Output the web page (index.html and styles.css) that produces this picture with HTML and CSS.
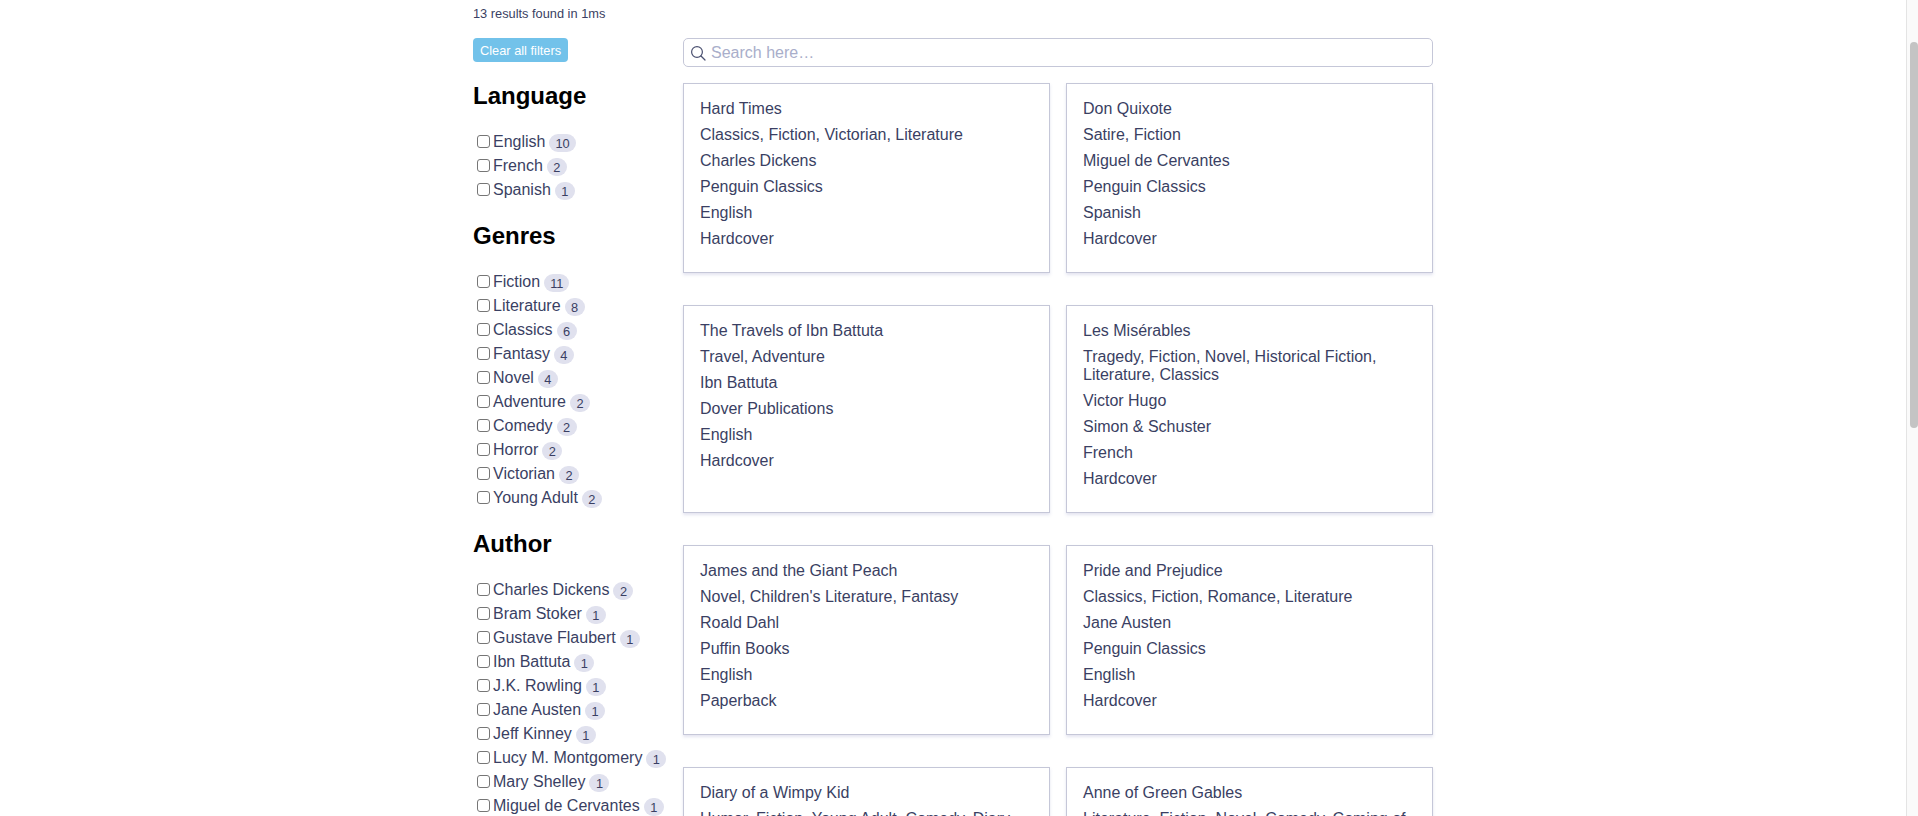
FILE: index.html
```html
<!DOCTYPE html>
<html lang="en">
<head>
    <meta charset="UTF-8">
    <meta name="viewport" content="width=device-width, initial-scale=1.0">
    <title>Book search</title>
    <link rel="stylesheet" href="styles.css">
</head>
<body>
    <div class="page">
        <div class="stats">13 results found in 1ms</div>
        <div class="layout">
            <aside class="filters">
                <button class="clear-btn">Clear all filters</button>

                <h2>Language</h2>
                <ul class="facet">
                    <li><input type="checkbox"><span>English</span><em>10</em></li>
                    <li><input type="checkbox"><span>French</span><em>2</em></li>
                    <li><input type="checkbox"><span>Spanish</span><em>1</em></li>
                </ul>

                <h2>Genres</h2>
                <ul class="facet">
                    <li><input type="checkbox"><span>Fiction</span><em>11</em></li>
                    <li><input type="checkbox"><span>Literature</span><em>8</em></li>
                    <li><input type="checkbox"><span>Classics</span><em>6</em></li>
                    <li><input type="checkbox"><span>Fantasy</span><em>4</em></li>
                    <li><input type="checkbox"><span>Novel</span><em>4</em></li>
                    <li><input type="checkbox"><span>Adventure</span><em>2</em></li>
                    <li><input type="checkbox"><span>Comedy</span><em>2</em></li>
                    <li><input type="checkbox"><span>Horror</span><em>2</em></li>
                    <li><input type="checkbox"><span>Victorian</span><em>2</em></li>
                    <li><input type="checkbox"><span>Young Adult</span><em>2</em></li>
                </ul>

                <h2>Author</h2>
                <ul class="facet">
                    <li><input type="checkbox"><span>Charles Dickens</span><em>2</em></li>
                    <li><input type="checkbox"><span>Bram Stoker</span><em>1</em></li>
                    <li><input type="checkbox"><span>Gustave Flaubert</span><em>1</em></li>
                    <li><input type="checkbox"><span>Ibn Battuta</span><em>1</em></li>
                    <li><input type="checkbox"><span>J.K. Rowling</span><em>1</em></li>
                    <li><input type="checkbox"><span>Jane Austen</span><em>1</em></li>
                    <li><input type="checkbox"><span>Jeff Kinney</span><em>1</em></li>
                    <li><input type="checkbox"><span>Lucy M. Montgomery</span><em>1</em></li>
                    <li><input type="checkbox"><span>Mary Shelley</span><em>1</em></li>
                    <li><input type="checkbox"><span>Miguel de Cervantes</span><em>1</em></li>
                </ul>
            </aside>

            <main class="results">
                <label class="search">
                    <svg width="16" height="16" viewBox="0 0 16 16" fill="none" stroke="#4a5070" stroke-width="1.2">
                        <circle cx="7" cy="7" r="5.4"/>
                        <path d="M11 11l4 4" stroke-linecap="round"/>
                    </svg>
                    <input type="text" placeholder="Search here…">
                </label>

                <div class="hits">
                    <article class="hit">
                        <p>Hard Times</p>
                        <p>Classics, Fiction, Victorian, Literature</p>
                        <p>Charles Dickens</p>
                        <p>Penguin Classics</p>
                        <p>English</p>
                        <p>Hardcover</p>
                    </article>
                    <article class="hit">
                        <p>Don Quixote</p>
                        <p>Satire, Fiction</p>
                        <p>Miguel de Cervantes</p>
                        <p>Penguin Classics</p>
                        <p>Spanish</p>
                        <p>Hardcover</p>
                    </article>
                    <article class="hit">
                        <p>The Travels of Ibn Battuta</p>
                        <p>Travel, Adventure</p>
                        <p>Ibn Battuta</p>
                        <p>Dover Publications</p>
                        <p>English</p>
                        <p>Hardcover</p>
                    </article>
                    <article class="hit">
                        <p>Les Misérables</p>
                        <p>Tragedy, Fiction, Novel, Historical Fiction, Literature, Classics</p>
                        <p>Victor Hugo</p>
                        <p>Simon &amp; Schuster</p>
                        <p>French</p>
                        <p>Hardcover</p>
                    </article>
                    <article class="hit">
                        <p>James and the Giant Peach</p>
                        <p>Novel, Children's Literature, Fantasy</p>
                        <p>Roald Dahl</p>
                        <p>Puffin Books</p>
                        <p>English</p>
                        <p>Paperback</p>
                    </article>
                    <article class="hit">
                        <p>Pride and Prejudice</p>
                        <p>Classics, Fiction, Romance, Literature</p>
                        <p>Jane Austen</p>
                        <p>Penguin Classics</p>
                        <p>English</p>
                        <p>Hardcover</p>
                    </article>
                    <article class="hit">
                        <p>Diary of a Wimpy Kid</p>
                        <p>Humor, Fiction, Young Adult, Comedy, Diary</p>
                    </article>
                    <article class="hit">
                        <p>Anne of Green Gables</p>
                        <p>Literature, Fiction, Novel, Comedy, Coming of Age</p>
                    </article>
                </div>
            </main>
        </div>
    </div>

    <div class="scrollbar"><div class="thumb"></div></div>
</body>
</html>
```

FILE: styles.css
```css
html, body {
    height: 100%;
}
body {
    display: flex;
    margin: 0;
    overflow: hidden;
    background-color: #fff;
    color: #3a3f63;
    font-family: "Liberation Sans", Arial, sans-serif;
    font-size: 16px;
}
.page {
    flex: 1;
    height: 816px;
    overflow: hidden;
    padding: 6px 0 0 473px;
    box-sizing: border-box;
}
.stats {
    font-size: 12.8px;
    line-height: 15px;
    margin-bottom: 17px;
}
.layout {
    display: flex;
    width: 960px;
}
.filters {
    width: 210px;
    flex-shrink: 0;
}
.clear-btn {
    display: block;
    height: 24px;
    padding: 0 7px;
    border: none;
    border-radius: 4px;
    background-color: #72c2ea;
    color: #fff;
    font-family: inherit;
    font-size: 12.8px;
    font-weight: normal;
}
h2 {
    margin: 20px 0;
    color: #000;
    font-size: 24px;
    line-height: 28px;
}
.facet {
    list-style: none;
    margin: 0;
    padding: 0;
}
.facet li {
    display: flex;
    align-items: center;
    height: 24px;
}
.facet input {
    appearance: none;
    width: 13px;
    height: 13px;
    margin: 0 3px 2px 4px;
    border: 1px solid #767676;
    border-radius: 3px;
    background-color: #fff;
}
.facet span {
    line-height: 18px;
}
.facet em {
    min-width: 8px;
    height: 18px;
    margin: 2px 0 0 4px;
    padding: 0 6px;
    border-radius: 9px;
    background-color: #e0e1ee;
    font-size: 12.8px;
    font-style: normal;
    line-height: 19px;
    text-align: center;
}
.results {
    flex: 1;
}
.search {
    display: flex;
    align-items: center;
    gap: 5px;
    height: 27px;
    padding-left: 6px;
    border: 1px solid #c5c7d8;
    border-radius: 5px;
    margin-bottom: 16px;
}
.search input {
    flex: 1;
    border: none;
    outline: none;
    padding: 0;
    color: inherit;
    font-family: inherit;
    font-size: 16px;
}
.search input::placeholder {
    color: #a9aeca;
}
.hits {
    display: grid;
    grid-template-columns: 367px 367px;
    column-gap: 16px;
    row-gap: 32px;
}
.hit {
    padding: 16px;
    border: 1px solid #c5c7d8;
    box-shadow: 0 2px 3px rgba(100, 105, 170, 0.18);
}
.hit p {
    margin: 0 0 8px;
    line-height: 18px;
}
.scrollbar {
    width: 12px;
    height: 816px;
    flex-shrink: 0;
    padding: 42px 0 0 3px;
    box-sizing: border-box;
    border-left: 1px solid #e4e4e4;
    background-color: #fafafa;
}
.thumb {
    width: 8px;
    height: 386px;
    border-radius: 4px;
    background-color: #c4c4c4;
}
```
